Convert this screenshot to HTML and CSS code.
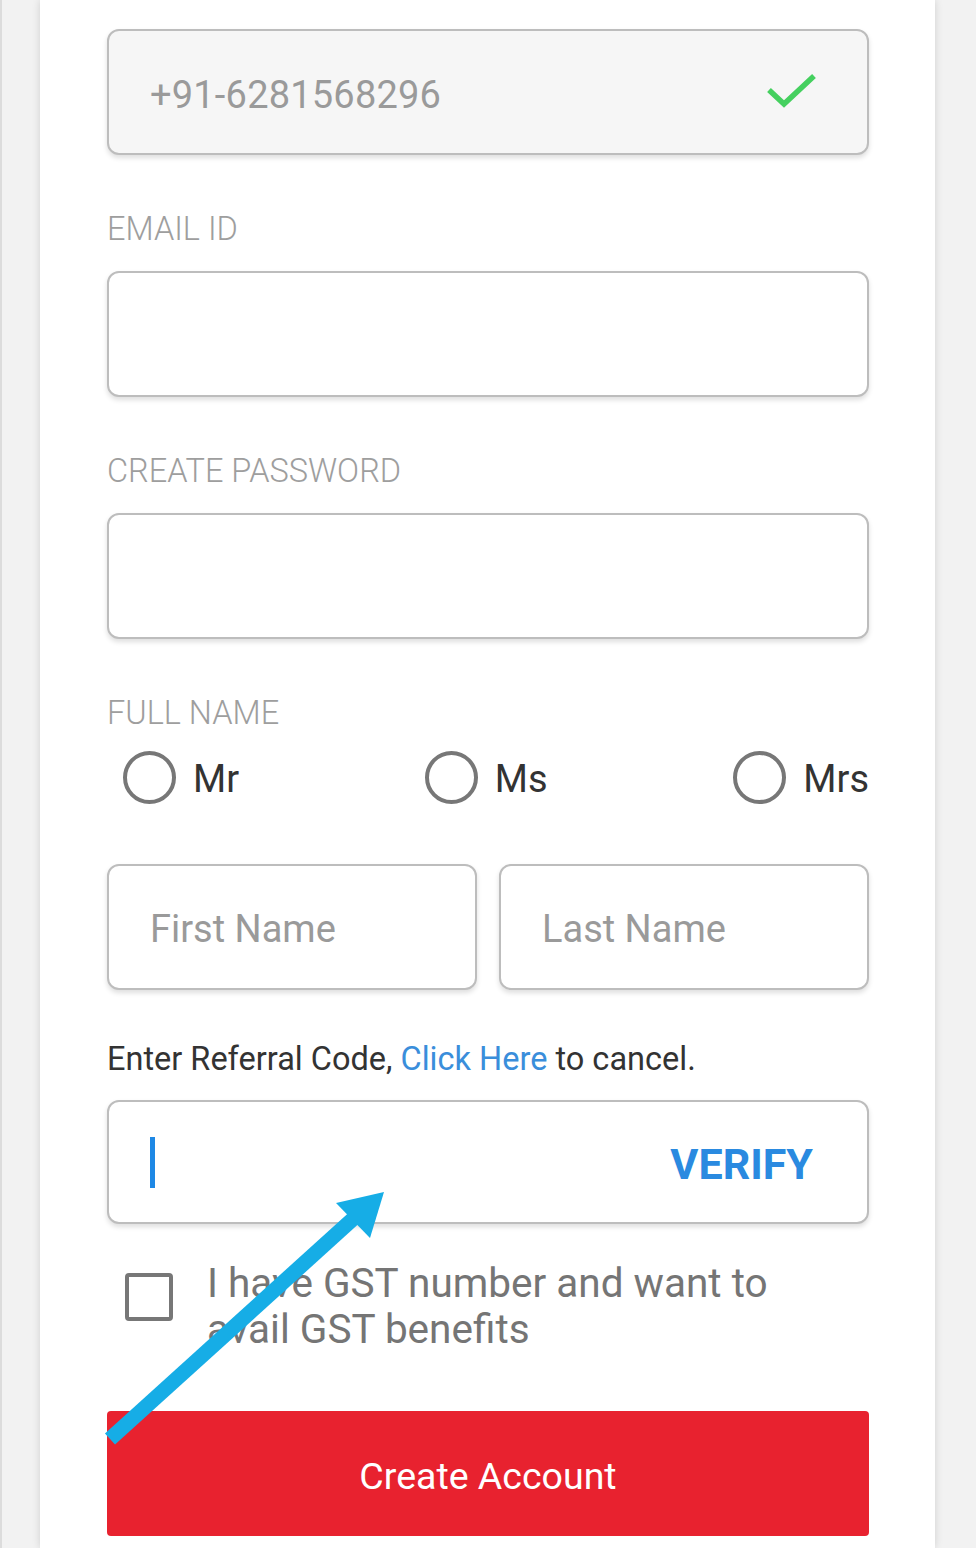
FILE: index.html
```html
<!DOCTYPE html>
<html lang="en">
<head>
<meta charset="utf-8">
<title>Create Account</title>
<link rel="stylesheet" href="styles.css">
</head>
<body>
<div class="page">
  <main class="card">
    <div class="field field-filled">
      <span class="value">+91-6281568296</span>
      <svg class="check" width="54" height="42" viewBox="0 0 54 42" aria-hidden="true">
        <polyline points="4,20 19,34 49,6" fill="none" stroke="#45d05f" stroke-width="5.5" stroke-linecap="butt" stroke-linejoin="miter"/>
      </svg>
    </div>

    <div class="label">EMAIL ID</div>
    <div class="field"></div>

    <div class="label">CREATE PASSWORD</div>
    <div class="field"></div>

    <div class="label label-name">FULL NAME</div>
    <div class="radios">
      <div class="radio"><span class="ring"></span><span class="radio-text">Mr</span></div>
      <div class="radio"><span class="ring"></span><span class="radio-text">Ms</span></div>
      <div class="radio"><span class="ring"></span><span class="radio-text">Mrs</span></div>
    </div>

    <div class="names">
      <div class="field field-half"><span class="placeholder">First Name</span></div>
      <div class="field field-half"><span class="placeholder">Last Name</span></div>
    </div>

    <p class="referral">Enter Referral Code, <span class="link">Click Here</span> to cancel.</p>
    <div class="field field-ref">
      <span class="cursor"></span>
      <span class="verify">VERIFY</span>
    </div>

    <div class="gst">
      <span class="box"></span>
      <span class="gst-text">I have GST number and want to avail GST benefits</span>
    </div>

    <button class="create">Create Account</button>
  </main>

  <svg class="arrow" width="976" height="1548" viewBox="0 0 976 1548" aria-hidden="true">
    <line x1="108" y1="1439" x2="352" y2="1218" stroke="#16ade6" stroke-width="15" stroke-linecap="butt"/>
    <polygon points="382,1192 334,1203 368,1238" fill="#16ade6"/>
  </svg>
</div>
</body>
</html>
```

FILE: styles.css
```css
* { box-sizing: border-box; }

html, body {
  margin: 0;
  padding: 0;
  background: #f2f2f2;
  font-family: Roboto, "Liberation Sans", Arial, sans-serif;
}

.page {
  position: relative;
  width: 976px;
  height: 1548px;
  overflow: hidden;
  border-left: 2px solid #dcdcdc;
}

.card {
  margin: 0 41px 0 38px;
  min-height: 1548px;
  background: #ffffff;
  box-shadow: 0 0 8px rgba(0, 0, 0, 0.14);
  padding: 29px 66px 0 67px;
  display: flex;
  flex-direction: column;
}

.card > * { flex-shrink: 0; }

.field {
  height: 126px;
  border: 2px solid #bdbdbd;
  border-radius: 12px;
  background: #ffffff;
  box-shadow: 0 3px 5px rgba(0, 0, 0, 0.13);
  display: flex;
  align-items: center;
  padding: 0 41px;
}

.field-filled {
  background: #f6f6f6;
  justify-content: space-between;
  padding-right: 48px;
}

.value {
  margin-top: 5px;
  font-size: 38px;
  color: #9a9a9a;
  letter-spacing: 0.2px;
}

.check { display: block; margin-top: -2px; }

.label {
  margin: 54px 0 22px;
  font-size: 32.5px;
  line-height: 40px;
  font-weight: 300;
  color: #9e9e9e;
}

.label-name { margin-bottom: 17px; }

.radios {
  height: 54px;
  display: flex;
  justify-content: space-between;
  align-items: center;
  padding-left: 16px;
}

.radio {
  display: flex;
  align-items: center;
  gap: 17px;
}

.ring {
  width: 53px;
  height: 53px;
  border: 4px solid #777777;
  border-radius: 50%;
}

.radio-text {
  margin-top: 3px;
  font-size: 38px;
  color: #333333;
}

.names {
  margin-top: 60px;
  display: flex;
  gap: 22px;
}

.field-half {
  flex: 1;
}

.placeholder {
  margin-top: 4px;
  font-size: 38px;
  color: #9a9a9a;
}

.referral {
  margin: 49px 0 21px;
  font-size: 32.5px;
  line-height: 40px;
  color: #333333;
}

.link { color: #3a8edb; }

.field-ref {
  height: 124px;
  justify-content: space-between;
  padding-right: 54px;
}

.cursor {
  width: 5px;
  height: 51px;
  background: #1e88e5;
}

.verify {
  margin-top: 4px;
  font-size: 43px;
  font-weight: 700;
  color: #2a8ae0;
}

.gst {
  margin-top: 36px;
  display: flex;
  align-items: flex-start;
}

.box {
  flex: none;
  width: 48px;
  height: 48px;
  margin: 13px 34px 0 18px;
  border: 4.5px solid #777777;
  border-radius: 4px;
}

.gst-text {
  font-size: 40.5px;
  line-height: 46px;
  color: #757575;
  max-width: 600px;
}

.create {
  margin-top: 59px;
  height: 125px;
  border: none;
  border-radius: 4px;
  background: #e8222f;
  color: #ffffff;
  font-family: Roboto, "Liberation Sans", Arial, sans-serif;
  font-size: 37.5px;
  padding: 4px 0 0;
}

.arrow {
  position: absolute;
  left: 0;
  top: 0;
  pointer-events: none;
}
```
